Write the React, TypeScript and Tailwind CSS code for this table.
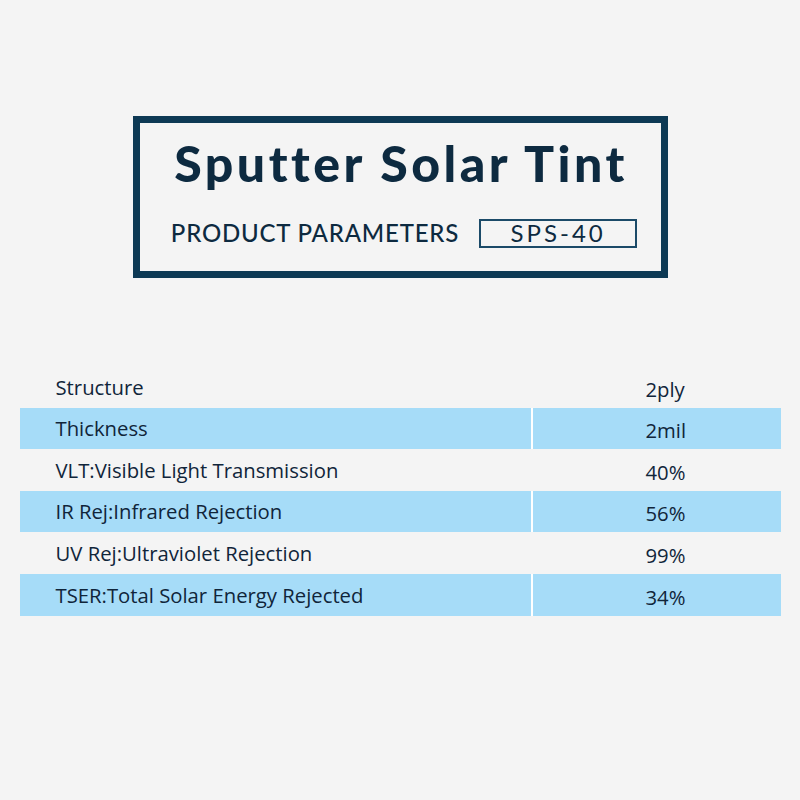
const rows = [
  { label: "Structure", value: "2ply" },
  { label: "Thickness", value: "2mil" },
  { label: "VLT:Visible Light Transmission", value: "40%" },
  { label: "IR Rej:Infrared Rejection", value: "56%" },
  { label: "UV Rej:Ultraviolet Rejection", value: "99%" },
  { label: "TSER:Total Solar Energy Rejected", value: "34%" },
]

function Header() {
  return (
    <div className="mx-auto flex h-[162px] w-[535px] flex-col items-center border-[7px] border-[#0d3954] text-[#0d2a40]">
      <h1 className="ml-[2px] mt-[10px] font-['Lato',sans-serif] text-[50px] font-black leading-[60px] tracking-[3.5px]">
        Sputter Solar Tint
      </h1>
      <div className="ml-[8px] mt-[22px] flex items-center gap-[20px]">
        <span className="font-['Lato',sans-serif] text-[24px] font-medium tracking-[0.8px]">PRODUCT PARAMETERS</span>
        <span className="flex h-[29px] w-[158px] items-center justify-center border-2 border-[#1b4a68] font-['Lato',sans-serif] text-[24px] tracking-[3px]">
          SPS-40
        </span>
      </div>
    </div>
  )
}

export default function App() {
  return (
    <div className="h-[800px] w-[800px] bg-[#f4f4f4] pt-[116px]">
      <Header />
      <div className="mx-auto mt-[88px] w-[761px] font-['Open_Sans',sans-serif] text-[20.3px] text-[#10253a]">
        {rows.map((row, i) => (
          <div key={row.label} className={`flex h-[41.6px] items-center ${i % 2 === 1 ? "bg-[#a6dcf8]" : ""}`}>
            <div className="flex h-full w-[511px] items-center pl-[36px]">{row.label}</div>
            <div className={`h-full w-[2px] ${i % 2 === 1 ? "bg-white" : ""}`} />
            <div className="flex h-full flex-1 items-center pl-[113px] pt-[4px]">{row.value}</div>
          </div>
        ))}
      </div>
    </div>
  )
}
